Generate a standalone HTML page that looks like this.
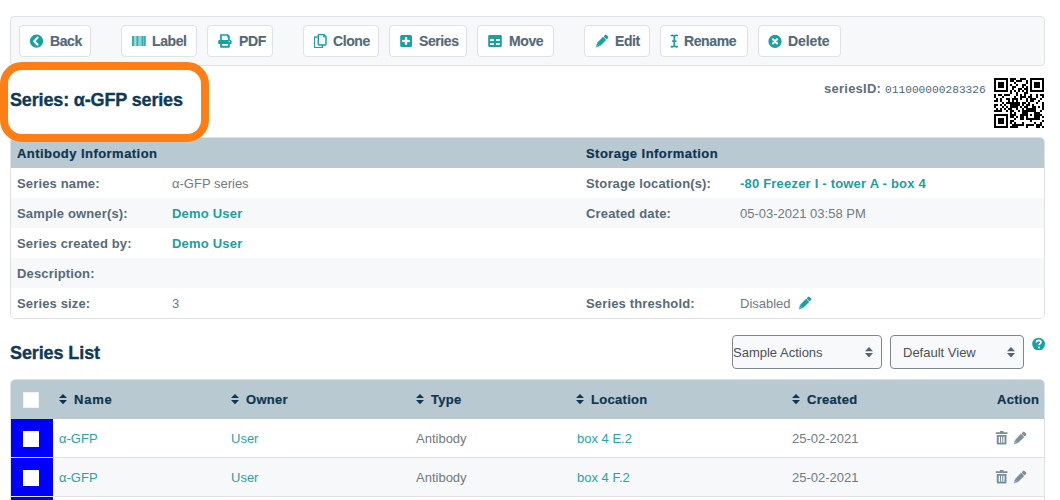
<!DOCTYPE html>
<html><head><meta charset="utf-8">
<style>
*{box-sizing:border-box;margin:0;padding:0}
html,body{width:1060px;height:500px;overflow:hidden;background:#fff;font-family:"Liberation Sans",sans-serif;position:relative}
.abs{position:absolute}
#toolbar{left:10px;top:16px;width:1035px;height:50px;background:#f6f8fa;border:1px solid #dfe3e7;border-radius:4px}
.btn{position:absolute;top:25px;height:32px;background:#fff;border:1px solid #dfe3e6;border-radius:4px;color:#52697a;-webkit-text-stroke:.15px #52697a;font-weight:bold;font-size:14px;letter-spacing:-0.4px;line-height:30px;white-space:nowrap}
.btn svg{position:absolute}
.btn span{position:absolute;top:0}
#title{left:10px;top:90px;letter-spacing:-0.15px;font-size:18px;font-weight:bold;color:#0f3a56;-webkit-text-stroke:.35px #0f3a56;white-space:nowrap}
#orange{left:0;top:62px;width:209px;height:80px;border:8px solid #fd7e14;border-radius:22px;z-index:5}
.tbl{position:absolute;left:10px;width:1035px;border:1px solid #dee2e6;border-radius:5px;overflow:hidden}
.hdr{background:#b9c9d1;color:#0e3550;font-weight:bold;font-size:13px}
.lbl{position:absolute;font-weight:bold;font-size:13px;letter-spacing:.15px;color:#566a79;white-space:nowrap}
.val{position:absolute;font-size:13px;color:#707b84;white-space:nowrap}
.lnk{position:absolute;font-size:13px;letter-spacing:.2px;color:#1aa0a0;font-weight:bold;white-space:nowrap}
.row{position:absolute;left:0;width:100%;height:30px}
.it{left:0;width:1060px;height:20px}
.hd{color:#0e3550;letter-spacing:.45px;-webkit-text-stroke:.2px #0e3550}
.th{color:#0e3550;letter-spacing:.3px;-webkit-text-stroke:.2px #0e3550}
.tl{color:#2aa3a6}
#stitle{left:10px;top:343px;font-size:18px;font-weight:bold;color:#0f3a56;-webkit-text-stroke:.35px #0f3a56;letter-spacing:-0.1px;white-space:nowrap}
.sel{position:absolute;top:335px;height:34px;background:#f8f9fa;border:1px solid #80868b;border-radius:4px;font-size:13px;color:#4b5157}
.sel span{position:absolute;top:8.5px;white-space:nowrap}
.cb{position:absolute;width:16px;height:16px;background:#fff}
</style></head>
<body>
<div id="toolbar" class="abs"></div>

<div class="btn" style="left:19px;width:72px"><svg style="left:9px;top:8px" width="14" height="14" viewBox="0 0 14 14"><circle cx="7.5" cy="7.2" r="6.6" fill="#17a1a3"/><path d="M8.6 3.6 L5.2 7.2 L8.6 10.8" fill="none" stroke="#fff" stroke-width="2" stroke-linecap="round" stroke-linejoin="round"/></svg><span style="left:30px">Back</span></div>
<div class="btn" style="left:121px;width:76px"><svg style="left:10px;top:10px" width="14" height="10" viewBox="0 0 14 10"><rect x="0" y="0" width="14" height="10" fill="#17a1a3" opacity=".6"/><rect x="0" y="0" width="1.8" height="10" fill="#17a1a3" opacity=".7"/><rect x="4.8" y="0" width="1.1" height="10" fill="#17a1a3" opacity=".7"/><rect x="9.9" y="0" width="1.1" height="10" fill="#17a1a3" opacity=".7"/><rect x="11.9" y="0" width="1.3" height="10" fill="#17a1a3" opacity=".7"/><rect x="2.4" y="0" width="1.6" height="10" fill="#fff" opacity=".35"/><rect x="7" y="0" width="1.6" height="10" fill="#fff" opacity=".25"/></svg><span style="left:30px">Label</span></div>
<div class="btn" style="left:207px;width:66px"><svg style="left:10px;top:8px" width="14" height="14" viewBox="0 0 14 14"><path d="M2.1 0.3 H10 L11.8 2.1 V6.5 H10.1 V2.9 L9 1.8 H3.8 V6.5 H2.1 Z" fill="#17a1a3"/><path d="M8.8 1.8 V3.4 H10.2 Z" fill="#17a1a3"/><rect x="0.2" y="6.1" width="13.4" height="4" rx="1.2" fill="#17a1a3"/><circle cx="11.4" cy="7.6" r=".75" fill="#fff"/><path d="M2.1 9 H11.8 V13 Q11.8 13.8 11 13.8 H2.9 Q2.1 13.8 2.1 13 Z M3.9 10.1 V11.8 H10 V10.1 Z" fill="#17a1a3" fill-rule="evenodd"/></svg><span style="left:31px">PDF</span></div>
<div class="btn" style="left:303px;width:76px"><svg style="left:10px;top:8px" width="13" height="14" viewBox="0 0 13 14"><path d="M3.6 2.9 H1.2 Q0.3 2.9 0.3 3.8 V12.9 Q0.3 13.8 1.2 13.8 H7.6 Q8.5 13.8 8.5 12.9 V11" fill="none" stroke="#17a1a3" stroke-width="1.5"/><path d="M4.3 1.2 Q4.3 0.5 5 0.5 H9.8 L12 2.7 V10.3 Q12 11 11.3 11 H5 Q4.3 11 4.3 10.3 Z" fill="none" stroke="#17a1a3" stroke-width="1.5" stroke-linejoin="round"/><path d="M9.2 0.8 V3.3 H11.8 Z" fill="#17a1a3"/></svg><span style="left:29px">Clone</span></div>
<div class="btn" style="left:389px;width:78px"><svg style="left:10px;top:9px" width="12" height="12" viewBox="0 0 12 12"><rect x="0.2" y="0" width="11.8" height="12" rx="1.5" fill="#17a1a3"/><rect x="2.1" y="4.9" width="7.7" height="2.2" fill="#fff"/><rect x="4.9" y="2.3" width="2.3" height="7.4" fill="#fff"/></svg><span style="left:29px">Series</span></div>
<div class="btn" style="left:477px;width:77px"><svg style="left:10px;top:9px" width="14" height="12" viewBox="0 0 14 12"><path d="M1.4 0 H12.6 Q13.8 0 13.8 1.2 V10.8 Q13.8 12 12.6 12 H1.4 Q0.2 12 0.2 10.8 V1.2 Q0.2 0 1.4 0 Z M2.1 4 V5.9 H5.9 V4 Z M8.1 4 V5.9 H11.8 V4 Z M2.1 8 V9.9 H5.9 V8 Z M8.1 8 V9.9 H11.8 V8 Z" fill="#17a1a3" fill-rule="evenodd"/></svg><span style="left:31px">Move</span></div>
<div class="btn" style="left:584px;width:66px"><svg style="left:10px;top:8px" width="14" height="14" viewBox="0 0 14 14"><g transform="translate(-0.3 0.3) rotate(45 7 7)"><rect x="4.8" y="-0.9" width="4.4" height="3.2" rx="1.1" fill="#17a1a3"/><rect x="4.8" y="2.9" width="4.4" height="8.6" fill="#17a1a3"/><path d="M4.8 11.5 H9.2 L7 15.6 Z" fill="#17a1a3"/><path d="M5.8 12.9 L7 15.1 L8.2 12.9 Z" fill="#fff" opacity=".45"/></g></svg><span style="left:30px">Edit</span></div>
<div class="btn" style="left:660px;width:88px"><svg style="left:9px;top:8px" width="9" height="14" viewBox="0 0 9 14"><path d="M1.4 1.5 Q2.9 1 4.3 2.1 Q5.7 1 7.2 1.5 M4.3 2.1 V11.9 M2.8 7.1 H5.8 M1.4 12.6 Q2.9 13.1 4.3 11.9 Q5.7 13.1 7.2 12.6" fill="none" stroke="#17a1a3" stroke-width="1.8" stroke-linecap="round"/></svg><span style="left:23px">Rename</span></div>
<div class="btn" style="left:758px;width:83px"><svg style="left:9px;top:9px" width="14" height="14" viewBox="0 0 14 14"><circle cx="7" cy="6.4" r="6.6" fill="#17a1a3"/><path d="M4.9 4.3 L9.1 8.5 M9.1 4.3 L4.9 8.5" stroke="#fff" stroke-width="2.1" stroke-linecap="round"/></svg><span style="left:29px;letter-spacing:-0.1px">Delete</span></div>

<div id="title" class="abs">Series: α-GFP series</div>
<div id="orange" class="abs"></div>

<div class="tbl" style="top:137px;height:182px">
  <div class="row hdr" style="top:0"></div>
  <div class="row" style="top:30px;background:#fff"></div>
  <div class="row" style="top:60px;background:#f6f8fa"></div>
  <div class="row" style="top:90px;background:#fff"></div>
  <div class="row" style="top:120px;background:#f6f8fa"></div>
  <div class="row" style="top:150px;background:#fff"></div>
</div>
<div class="abs it" style="top:146px">
  <div class="lbl hd" style="left:17px">Antibody Information</div>
  <div class="lbl hd" style="left:586px">Storage Information</div>
</div>
<div class="abs it" style="top:176px">
  <div class="lbl" style="left:17px">Series name:</div>
  <div class="val" style="left:172px">α-GFP series</div>
  <div class="lbl" style="left:586px">Storage location(s):</div>
  <div class="lnk" style="left:740px">-80 Freezer I - tower A - box 4</div>
</div>
<div class="abs it" style="top:206px">
  <div class="lbl" style="left:17px">Sample owner(s):</div>
  <div class="lnk" style="left:172px">Demo User</div>
  <div class="lbl" style="left:586px">Created date:</div>
  <div class="val" style="left:740px">05-03-2021 03:58 PM</div>
</div>
<div class="abs it" style="top:236px">
  <div class="lbl" style="left:17px">Series created by:</div>
  <div class="lnk" style="left:172px">Demo User</div>
</div>
<div class="abs it" style="top:266px">
  <div class="lbl" style="left:17px">Description:</div>
</div>
<div class="abs it" style="top:296px">
  <div class="lbl" style="left:17px">Series size:</div>
  <div class="val" style="left:172px">3</div>
  <div class="lbl" style="left:586px">Series threshold:</div>
  <div class="val" style="left:740px">Disabled</div>
</div>

<div id="stitle" class="abs">Series List</div>
<div class="sel" style="left:732px;width:150px"><span style="left:0px">Sample Actions</span></div>
<div class="sel" style="left:890px;width:134px"><span style="left:12px">Default View</span></div>

<div class="tbl" style="top:379px;height:130px">
  <div class="row hdr" style="top:0;height:39px"></div>
  <div class="row" style="top:39px;height:39px;background:#fff;border-bottom:1px solid #dee2e6"></div>
  <div class="row" style="top:78px;height:39px;background:#f6f8fa;border-bottom:1px solid #dee2e6"></div>
  <div class="row" style="top:117px;height:39px;background:#fff"></div>
  <div class="abs" style="left:0;top:39px;width:42px;height:38px;background:#0000ff"></div><div class="abs" style="left:0;top:78px;width:42px;height:38px;background:#0000ff"></div><div class="abs" style="left:0;top:117px;width:42px;height:30px;background:#0000ff"></div>
</div>
<div class="cb" style="left:23px;top:392px;border:1px solid #eef0f2"></div>
<div class="cb" style="left:23px;top:431px"></div>
<div class="cb" style="left:23px;top:470px"></div>

<div class="abs it" style="top:392px">
  <div class="lbl th" style="left:74px;letter-spacing:.8px">Name</div>
  <div class="lbl th" style="left:246px">Owner</div>
  <div class="lbl th" style="left:431px">Type</div>
  <div class="lbl th" style="left:591px">Location</div>
  <div class="lbl th" style="left:807px">Created</div>
  <div class="lbl th" style="left:997px">Action</div>
</div>
<div class="abs it" style="top:431px">
  <div class="val tl" style="left:59px">α-GFP</div>
  <div class="val tl" style="left:231px">User</div>
  <div class="val" style="left:416px">Antibody</div>
  <div class="val tl" style="left:577px">box 4 E.2</div>
  <div class="val" style="left:792px">25-02-2021</div>
</div>
<div class="abs it" style="top:470px">
  <div class="val tl" style="left:59px">α-GFP</div>
  <div class="val tl" style="left:231px">User</div>
  <div class="val" style="left:416px">Antibody</div>
  <div class="val tl" style="left:577px">box 4 F.2</div>
  <div class="val" style="left:792px">25-02-2021</div>
</div>

<div class="abs" style="left:824px;top:81px;letter-spacing:.25px;font-size:13px;font-weight:bold;color:#5d6f7d;white-space:nowrap">seriesID: <span style="font-family:'Liberation Mono',monospace;font-weight:normal;letter-spacing:0;font-size:11.2px;color:#4f6a80">011000000283326</span></div>
<svg class="abs" style="left:994px;top:78px" width="50" height="50" viewBox="0 0 25 25" shape-rendering="crispEdges"><path d="M0 0h7v1h-7zM8 0h3v1h-3zM13 0h3v1h-3zM18 0h7v1h-7zM0 1h1v1h-1zM6 1h1v1h-1zM8 1h2v1h-2zM11 1h3v1h-3zM16 1h1v1h-1zM18 1h1v1h-1zM24 1h1v1h-1zM0 2h1v1h-1zM2 2h3v1h-3zM6 2h1v1h-1zM10 2h1v1h-1zM16 2h1v1h-1zM18 2h1v1h-1zM20 2h3v1h-3zM24 2h1v1h-1zM0 3h1v1h-1zM2 3h3v1h-3zM6 3h1v1h-1zM8 3h1v1h-1zM11 3h1v1h-1zM14 3h2v1h-2zM18 3h1v1h-1zM20 3h3v1h-3zM24 3h1v1h-1zM0 4h1v1h-1zM2 4h3v1h-3zM6 4h1v1h-1zM9 4h2v1h-2zM14 4h1v1h-1zM16 4h1v1h-1zM18 4h1v1h-1zM20 4h3v1h-3zM24 4h1v1h-1zM0 5h1v1h-1zM6 5h1v1h-1zM9 5h1v1h-1zM12 5h2v1h-2zM15 5h2v1h-2zM18 5h1v1h-1zM24 5h1v1h-1zM0 6h7v1h-7zM8 6h1v1h-1zM10 6h1v1h-1zM12 6h1v1h-1zM14 6h1v1h-1zM16 6h1v1h-1zM18 6h7v1h-7zM8 7h1v1h-1zM11 7h1v1h-1zM15 7h2v1h-2zM0 8h1v1h-1zM2 8h2v1h-2zM5 8h3v1h-3zM11 8h1v1h-1zM13 8h1v1h-1zM15 8h1v1h-1zM18 8h1v1h-1zM21 8h1v1h-1zM23 8h2v1h-2zM0 9h1v1h-1zM4 9h1v1h-1zM10 9h1v1h-1zM13 9h3v1h-3zM17 9h2v1h-2zM21 9h1v1h-1zM24 9h1v1h-1zM1 10h1v1h-1zM3 10h1v1h-1zM6 10h2v1h-2zM9 10h3v1h-3zM13 10h1v1h-1zM16 10h1v1h-1zM18 10h3v1h-3zM23 10h1v1h-1zM0 11h2v1h-2zM3 11h1v1h-1zM7 11h1v1h-1zM9 11h1v1h-1zM11 11h1v1h-1zM16 11h1v1h-1zM18 11h2v1h-2zM22 11h1v1h-1zM4 12h1v1h-1zM6 12h7v1h-7zM14 12h2v1h-2zM17 12h1v1h-1zM21 12h1v1h-1zM24 12h1v1h-1zM0 13h2v1h-2zM3 13h1v1h-1zM5 13h1v1h-1zM8 13h5v1h-5zM14 13h1v1h-1zM16 13h2v1h-2zM19 13h1v1h-1zM24 13h1v1h-1zM0 14h1v1h-1zM4 14h1v1h-1zM6 14h1v1h-1zM8 14h4v1h-4zM13 14h1v1h-1zM15 14h2v1h-2zM19 14h2v1h-2zM22 14h1v1h-1zM24 14h1v1h-1zM1 15h1v1h-1zM3 15h1v1h-1zM5 15h1v1h-1zM7 15h2v1h-2zM11 15h1v1h-1zM14 15h1v1h-1zM16 15h5v1h-5zM24 15h1v1h-1zM0 16h4v1h-4zM6 16h1v1h-1zM8 16h2v1h-2zM12 16h1v1h-1zM14 16h7v1h-7zM23 16h1v1h-1zM8 17h1v1h-1zM10 17h1v1h-1zM14 17h3v1h-3zM20 17h3v1h-3zM0 18h7v1h-7zM8 18h3v1h-3zM13 18h4v1h-4zM18 18h1v1h-1zM20 18h4v1h-4zM0 19h1v1h-1zM6 19h1v1h-1zM8 19h2v1h-2zM11 19h1v1h-1zM13 19h2v1h-2zM16 19h1v1h-1zM20 19h3v1h-3zM24 19h1v1h-1zM0 20h1v1h-1zM2 20h3v1h-3zM6 20h1v1h-1zM10 20h1v1h-1zM13 20h2v1h-2zM16 20h7v1h-7zM0 21h1v1h-1zM2 21h3v1h-3zM6 21h1v1h-1zM8 21h2v1h-2zM18 21h1v1h-1zM24 21h1v1h-1zM0 22h1v1h-1zM2 22h3v1h-3zM6 22h1v1h-1zM8 22h1v1h-1zM10 22h1v1h-1zM14 22h1v1h-1zM20 22h1v1h-1zM23 22h1v1h-1zM0 23h1v1h-1zM6 23h1v1h-1zM9 23h6v1h-6zM16 23h4v1h-4zM21 23h3v1h-3zM0 24h7v1h-7zM8 24h4v1h-4zM16 24h1v1h-1zM21 24h2v1h-2zM24 24h1v1h-1z" fill="#000"/></svg>
<svg class="abs" style="left:59px;top:394px" width="8" height="11" viewBox="0 0 8 11"><path d="M4 0 L8 4 H0 Z M0 6 H8 L4 10.2 Z" fill="#0e3550"/></svg><svg class="abs" style="left:231px;top:394px" width="8" height="11" viewBox="0 0 8 11"><path d="M4 0 L8 4 H0 Z M0 6 H8 L4 10.2 Z" fill="#0e3550"/></svg><svg class="abs" style="left:416px;top:394px" width="8" height="11" viewBox="0 0 8 11"><path d="M4 0 L8 4 H0 Z M0 6 H8 L4 10.2 Z" fill="#0e3550"/></svg><svg class="abs" style="left:576px;top:394px" width="8" height="11" viewBox="0 0 8 11"><path d="M4 0 L8 4 H0 Z M0 6 H8 L4 10.2 Z" fill="#0e3550"/></svg><svg class="abs" style="left:792px;top:394px" width="8" height="11" viewBox="0 0 8 11"><path d="M4 0 L8 4 H0 Z M0 6 H8 L4 10.2 Z" fill="#0e3550"/></svg><svg class="abs" style="left:995px;top:431px" width="13" height="14" viewBox="0 0 13 14"><path d="M0.75 1.25 H12.5 V3 H0.75 Z M5 0 H8.5 V1.3 H5 Z" fill="#7b8e99"/><path d="M1.75 4 H11.5 V12.5 Q11.5 13.5 10.5 13.5 H2.75 Q1.75 13.5 1.75 12.5 Z M3.75 5.75 V11.75 H5 V5.75 Z M6 5.75 V11.75 H7.25 V5.75 Z M8.25 5.75 V11.75 H9.5 V5.75 Z" fill="#7b8e99" fill-rule="evenodd"/></svg><svg class="abs" style="left:995px;top:470px" width="13" height="14" viewBox="0 0 13 14"><path d="M0.75 1.25 H12.5 V3 H0.75 Z M5 0 H8.5 V1.3 H5 Z" fill="#7b8e99"/><path d="M1.75 4 H11.5 V12.5 Q11.5 13.5 10.5 13.5 H2.75 Q1.75 13.5 1.75 12.5 Z M3.75 5.75 V11.75 H5 V5.75 Z M6 5.75 V11.75 H7.25 V5.75 Z M8.25 5.75 V11.75 H9.5 V5.75 Z" fill="#7b8e99" fill-rule="evenodd"/></svg><svg class="abs" style="left:1013px;top:431px" width="14" height="14" viewBox="0 0 14 14"><g transform="translate(-0.3 0.3) rotate(45 7 7)"><rect x="4.8" y="-0.9" width="4.4" height="3.2" rx="1.1" fill="#7b8e99"/><rect x="4.8" y="2.9" width="4.4" height="8.6" fill="#7b8e99"/><path d="M4.8 11.5 H9.2 L7 15.6 Z" fill="#7b8e99"/><path d="M5.8 12.9 L7 15.1 L8.2 12.9 Z" fill="#fff" opacity=".45"/></g></svg><svg class="abs" style="left:1013px;top:470px" width="14" height="14" viewBox="0 0 14 14"><g transform="translate(-0.3 0.3) rotate(45 7 7)"><rect x="4.8" y="-0.9" width="4.4" height="3.2" rx="1.1" fill="#7b8e99"/><rect x="4.8" y="2.9" width="4.4" height="8.6" fill="#7b8e99"/><path d="M4.8 11.5 H9.2 L7 15.6 Z" fill="#7b8e99"/><path d="M5.8 12.9 L7 15.1 L8.2 12.9 Z" fill="#fff" opacity=".45"/></g></svg><svg class="abs" style="left:798px;top:296px" width="14" height="14" viewBox="0 0 14 14"><g transform="translate(-0.3 0.3) rotate(45 7 7)"><rect x="4.8" y="-0.9" width="4.4" height="3.2" rx="1.1" fill="#17a1a3"/><rect x="4.8" y="2.9" width="4.4" height="8.6" fill="#17a1a3"/><path d="M4.8 11.5 H9.2 L7 15.6 Z" fill="#17a1a3"/><path d="M5.8 12.9 L7 15.1 L8.2 12.9 Z" fill="#fff" opacity=".45"/></g></svg><svg class="abs" style="left:865px;top:347px" width="8" height="11" viewBox="0 0 8 11"><path d="M4 0 L8 4.3 H0 Z M0 6 H8 L4 10.6 Z" fill="#51667a"/></svg><svg class="abs" style="left:1007px;top:347px" width="8" height="11" viewBox="0 0 8 11"><path d="M4 0 L8 4.3 H0 Z M0 6 H8 L4 10.6 Z" fill="#51667a"/></svg><svg class="abs" style="left:1032px;top:337px" width="13" height="13" viewBox="0 0 13 13"><circle cx="6.6" cy="7.1" r="6.4" fill="#17a1a3"/><path d="M4.4 5.4 Q4.4 3.3 6.7 3.3 Q8.9 3.3 8.9 5.2 Q8.9 6.4 7.7 7 Q7.1 7.3 7.1 8.2" fill="none" stroke="#fff" stroke-width="1.7"/><circle cx="7" cy="10.5" r="1" fill="#fff"/></svg>
</body></html>
